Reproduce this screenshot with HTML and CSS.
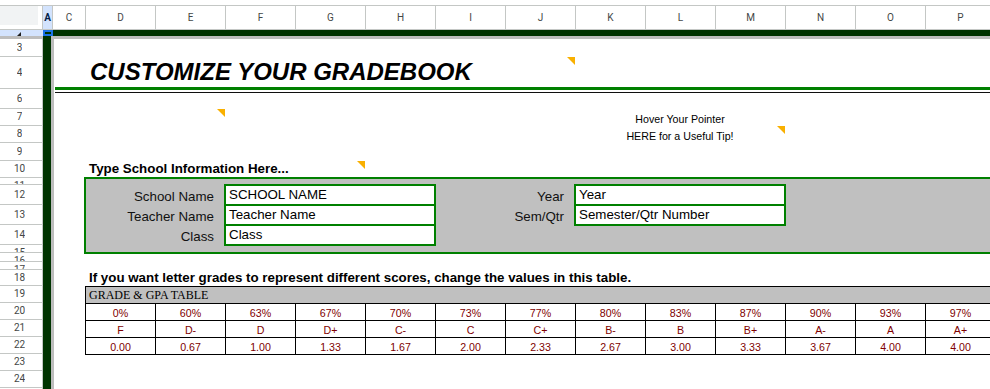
FILE: index.html
```html
<!DOCTYPE html>
<html lang="en">
<head>
<meta charset="utf-8">
<title>Customize Your Gradebook</title>
<link rel="stylesheet" href="styles.css">
</head>
<body>
<div class="app">
  <div class="topgap"></div>
  <div class="colheads">
    <div class="corner"><div class="corner-box"></div></div>
    <div class="ch ch-a">A</div>
    <div class="ch ch-c">C</div>
    <div class="ch">D</div>
    <div class="ch">E</div>
    <div class="ch">F</div>
    <div class="ch">G</div>
    <div class="ch">H</div>
    <div class="ch">I</div>
    <div class="ch">J</div>
    <div class="ch">K</div>
    <div class="ch">L</div>
    <div class="ch">M</div>
    <div class="ch">N</div>
    <div class="ch">O</div>
    <div class="ch">P</div>
  </div>
  <div class="row2">
    <div class="rh2"><span class="mini-tri"></span></div>
    <div class="a2"></div>
    <div class="band"></div>
  </div>
  <div class="hfreeze">
    <div class="hf-l"></div><div class="hf-a"></div><div class="hf-r"></div>
  </div>
  <div class="body">
    <div class="rowheads">
      <div class="rh h18"><span>3</span></div>
      <div class="rh h32"><span>4</span></div>
      <div class="rh h20"><span>6</span></div>
      <div class="rh h17"><span>7</span></div>
      <div class="rh h17"><span>8</span></div>
      <div class="rh h18"><span>9</span></div>
      <div class="rh h17"><span>10</span></div>
      <div class="rh h7"><span>11</span></div>
      <div class="rh h20"><span>12</span></div>
      <div class="rh h20"><span>13</span></div>
      <div class="rh h20"><span>14</span></div>
      <div class="rh h8"><span>15</span></div>
      <div class="rh h9"><span>16</span></div>
      <div class="rh h8"><span>17</span></div>
      <div class="rh h16"><span>18</span></div>
      <div class="rh h17"><span>19</span></div>
      <div class="rh h17"><span>20</span></div>
      <div class="rh h17"><span>21</span></div>
      <div class="rh h17"><span>22</span></div>
      <div class="rh h17"><span>23</span></div>
      <div class="rh h17"><span>24</span></div>
      <div class="rh h17"><span>25</span></div>
    </div>
    <div class="cola"></div>
    <div class="vfreeze"></div>
    <div class="grid">
      <div class="title">CUSTOMIZE YOUR GRADEBOOK</div>
      <div class="rule-green"></div>
      <div class="rule-dark"></div>

      <div class="note n-j4"></div>
      <div class="note n-e7"></div>
      <div class="note n-g10"></div>
      <div class="note n-m8"></div>

      <div class="tip tip1">Hover Your Pointer</div>
      <div class="tip tip2">HERE for a Useful Tip!</div>

      <div class="section-label type-label">Type School Information Here...</div>

      <div class="infobox"></div>
      <div class="flabel fl-school">School Name</div>
      <div class="flabel fl-teacher">Teacher Name</div>
      <div class="flabel fl-class">Class</div>
      <div class="flabel fl-right fl-year">Year</div>
      <div class="flabel fl-right fl-sem">Sem/Qtr</div>

      <div class="fieldbox fb-school">
        <div class="field">SCHOOL NAME</div>
        <div class="field">Teacher Name</div>
        <div class="field">Class</div>
      </div>
      <div class="fieldbox fb-year">
        <div class="field">Year</div>
        <div class="field">Semester/Qtr Number</div>
      </div>

      <div class="section-label grade-label">If you want letter grades to represent different scores, change the values in this table.</div>

      <div class="gtable">
        <div class="gt-title">GRADE &amp; GPA TABLE</div>
        <div class="gt-row">
          <div class="gt-cell">0%</div><div class="gt-cell">60%</div><div class="gt-cell">63%</div><div class="gt-cell">67%</div><div class="gt-cell">70%</div><div class="gt-cell">73%</div><div class="gt-cell">77%</div><div class="gt-cell">80%</div><div class="gt-cell">83%</div><div class="gt-cell">87%</div><div class="gt-cell">90%</div><div class="gt-cell">93%</div><div class="gt-cell">97%</div>
        </div>
        <div class="gt-row">
          <div class="gt-cell">F</div><div class="gt-cell">D-</div><div class="gt-cell">D</div><div class="gt-cell">D+</div><div class="gt-cell">C-</div><div class="gt-cell">C</div><div class="gt-cell">C+</div><div class="gt-cell">B-</div><div class="gt-cell">B</div><div class="gt-cell">B+</div><div class="gt-cell">A-</div><div class="gt-cell">A</div><div class="gt-cell">A+</div>
        </div>
        <div class="gt-row">
          <div class="gt-cell">0.00</div><div class="gt-cell">0.67</div><div class="gt-cell">1.00</div><div class="gt-cell">1.33</div><div class="gt-cell">1.67</div><div class="gt-cell">2.00</div><div class="gt-cell">2.33</div><div class="gt-cell">2.67</div><div class="gt-cell">3.00</div><div class="gt-cell">3.33</div><div class="gt-cell">3.67</div><div class="gt-cell">4.00</div><div class="gt-cell">4.00</div>
        </div>
      </div>
    </div>
  </div>
</div>
</body>
</html>
```

FILE: styles.css
```css
* { box-sizing: border-box; }
html, body { margin: 0; padding: 0; }
body {
  width: 990px;
  height: 389px;
  overflow: hidden;
  background: #fff;
  font-family: "Liberation Sans", Arial, sans-serif;
  color: #000;
}
.app {
  width: 990px;
  height: 389px;
  overflow: hidden;
  display: flex;
  flex-direction: column;
}
.topgap { height: 5px; flex: none; }

/* column headers */
.colheads {
  height: 25px;
  flex: none;
  display: flex;
  border-top: 1px solid #c4c7c5;
  border-bottom: 1px solid #c4c7c5;
  font-family: Roboto, "Liberation Sans", sans-serif;
  font-size: 10px;
  color: #444746;
  overflow: hidden;
}
.corner {
  width: 43px;
  flex: none;
  border-right: 1px solid #c4c7c5;
}
.corner-box {
  width: 38px;
  height: 19px;
  background: #f1f3f4;
}
.ch {
  width: 70px;
  flex: none;
  display: flex;
  align-items: center;
  justify-content: center;
  border-right: 1px solid #c4c7c5;
}
.ch-a {
  width: 10px;
  background: #d3e3fd;
  color: #041e49;
  font-weight: bold;
}
.ch-c { width: 33px; }

/* frozen row 2 */
.row2 { height: 6px; flex: none; display: flex; }
.rh2 {
  width: 43px;
  flex: none;
  background: #d3e3fd;
  display: flex;
  align-items: flex-end;
  padding-left: 17px;
}
.mini-tri {
  width: 4px;
  height: 4px;
  background: #1f1f1f;
  clip-path: polygon(100% 0, 100% 100%, 0 100%);
}
.a2 {
  width: 10px;
  flex: none;
  border: 2px solid #1a73e8;
  background: #003300;
}
.band { flex: 1; background: #003300; }

.hfreeze { height: 3px; flex: none; display: flex; }
.hf-l { width: 43px; flex: none; background: #bdbdbd; }
.hf-a { width: 8px; flex: none; background: #003300; }
.hf-r { flex: 1; background: #bdbdbd; }

/* body */
.body { flex: 1; display: flex; overflow: hidden; }
.rowheads {
  width: 43px;
  flex: none;
  display: flex;
  flex-direction: column;
  border-right: 1px solid #c4c7c5;
  font-family: Roboto, "Liberation Sans", sans-serif;
  font-size: 10px;
  color: #444746;
}
.rh {
  flex: none;
  display: flex;
  justify-content: center;
  overflow: hidden;
  border-bottom: 1px solid #c4c7c5;
  padding-right: 3px;
}
.rh span {
  height: 16px;
  max-height: 100%;
  overflow: hidden;
  line-height: 16px;
  margin: auto 0;
}
.h7 { height: 7px; }
.h8 { height: 8px; }
.h9 { height: 9px; }
.h16 { height: 16px; }
.h17 { height: 17px; }
.h18 { height: 18px; }
.h20 { height: 20px; }
.h32 { height: 32px; }

.cola { width: 8px; flex: none; background: #003300; }
.vfreeze { width: 3px; flex: none; background: #bdbdbd; }

.grid {
  flex: none;
  width: 941px;
  display: grid;
  grid-template-columns: 31px repeat(13, 70px);
  grid-template-rows: 18px 32px 20px 17px 17px 18px 17px 7px 20px 20px 20px 8px 9px 8px 16px 17px 17px 17px 17px 17px 17px;
  align-content: start;
}

.title {
  grid-row: 2;
  grid-column: 2 / -1;
  display: flex;
  align-items: flex-end;
  padding: 0 0 4px 5px;
  font-size: 24px;
  font-weight: bold;
  font-style: italic;
  line-height: 27px;
  white-space: nowrap;
}
.rule-green {
  grid-row: 2;
  grid-column: 1 / -1;
  align-self: end;
  height: 3px;
  margin: 0 0 -1px 1px;
  background: #008000;
}
.rule-dark {
  grid-row: 3;
  grid-column: 1 / -1;
  align-self: start;
  height: 1px;
  margin: 3px 0 0 1px;
  background: #101010;
}

.note {
  width: 8px;
  height: 8px;
  justify-self: end;
  align-self: start;
  background: #f9b000;
  clip-path: polygon(0 0, 100% 0, 100% 100%);
}
.n-j4 { grid-row: 2; grid-column: 8; }
.n-e7 { grid-row: 4; grid-column: 3; }
.n-g10 { grid-row: 7; grid-column: 5; }
.n-m8 { grid-row: 5; grid-column: 11; }

.tip {
  grid-column: 9 / 12;
  display: flex;
  align-items: flex-end;
  justify-content: center;
  font-size: 10.67px;
  line-height: 13px;
  white-space: nowrap;
}
.tip1 { grid-row: 4; }
.tip2 { grid-row: 5; }

.section-label {
  grid-column: 2 / -1;
  display: flex;
  align-items: flex-end;
  padding-left: 4px;
  font-size: 13.33px;
  font-weight: bold;
  line-height: 16px;
  white-space: nowrap;
}
.type-label { grid-row: 7; padding-bottom: 1px; }
.grade-label { grid-row: 15; }

.infobox {
  grid-row: 8 / 13;
  grid-column: 2 / -1;
  margin: -1px 0 -1px -1px;
  border: 2px solid #008000;
  border-right: none;
  background: #c0c0c0;
}
.flabel {
  grid-column: 2 / 4;
  display: flex;
  align-items: flex-end;
  justify-content: flex-end;
  padding-right: 11px;
  font-size: 13.33px;
  line-height: 16px;
  color: #111;
  white-space: nowrap;
}
.fl-right { grid-column: 8; }
.fl-school { grid-row: 9; }
.fl-teacher { grid-row: 10; }
.fl-class { grid-row: 11; }
.fl-year { grid-row: 9; }
.fl-sem { grid-row: 10; }

.fieldbox {
  display: flex;
  flex-direction: column;
  margin: -1px;
  border: 2px solid #008000;
  background: #fff;
}
.fb-school { grid-row: 9 / 12; grid-column: 4 / 7; }
.fb-year { grid-row: 9 / 11; grid-column: 9 / 12; }
.field {
  flex: none;
  height: 18px;
  line-height: 18px;
  padding-left: 3px;
  font-size: 13.33px;
  white-space: nowrap;
  overflow: hidden;
}
.field + .field {
  height: 20px;
  border-top: 2px solid #008000;
}

.gtable {
  grid-row: 16 / 20;
  grid-column: 2 / -1;
  align-self: start;
  border-top: 1px solid #000;
}
.gt-title {
  height: 17px;
  border-left: 1px solid #000;
  border-bottom: 1px solid #000;
  background: #c0c0c0;
  padding-left: 3px;
  font-family: "Liberation Serif", "Times New Roman", serif;
  font-size: 12px;
  line-height: 16px;
  white-space: nowrap;
}
.gt-row {
  display: grid;
  grid-template-columns: repeat(13, 70px);
}
.gt-cell {
  height: 17px;
  display: flex;
  align-items: flex-end;
  justify-content: center;
  border-left: 1px solid #000;
  border-bottom: 1px solid #000;
  font-size: 10.67px;
  line-height: 13px;
  color: #800000;
  white-space: nowrap;
}
```
